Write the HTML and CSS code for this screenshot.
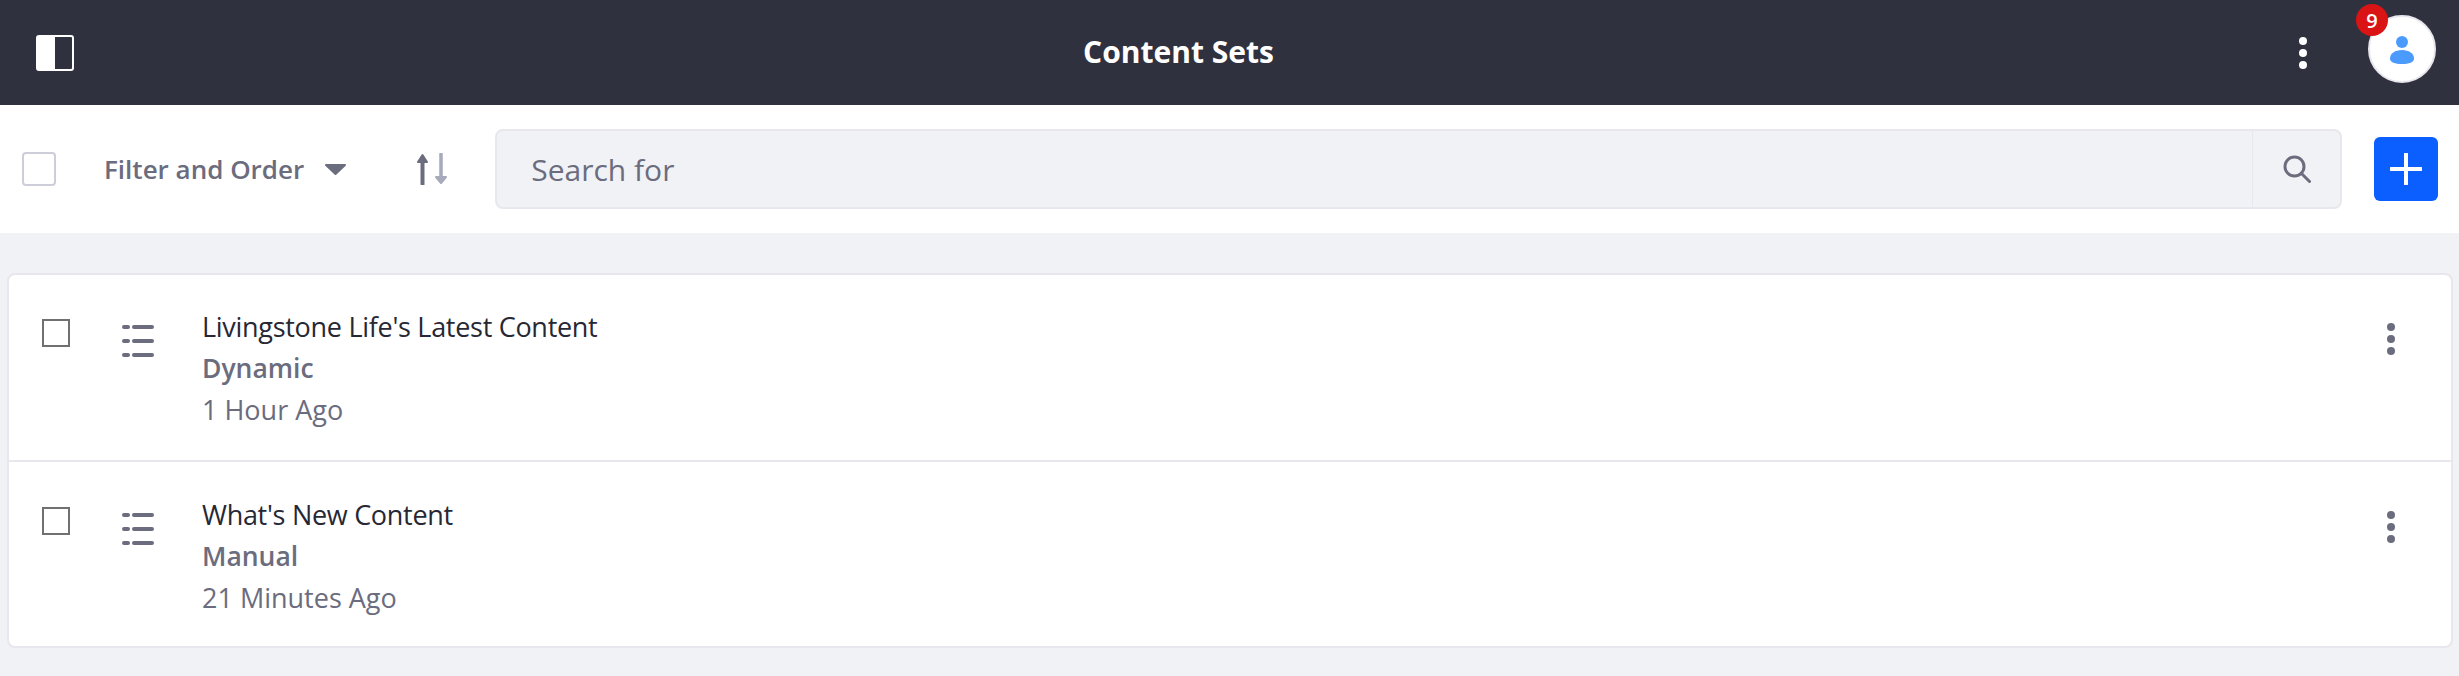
FILE: index.html
```html
<!DOCTYPE html>
<html lang="en">
<head>
    <meta charset="UTF-8">
    <meta name="viewport" content="width=device-width, initial-scale=1.0">
    <title>Content Sets</title>
    <link rel="stylesheet" href="styles.css">
</head>
<body>

    <header class="topbar">
        <svg class="panel-icon" viewBox="0 0 38 36">
            <rect x="1" y="1" width="36" height="34" rx="2" fill="none" stroke="#fff" stroke-width="2"/>
            <rect x="1" y="1" width="18" height="34" fill="#fff"/>
        </svg>
        <h1 class="page-title">Content Sets</h1>
        <div class="topbar-right">
            <div class="dots dots-light"><span></span><span></span><span></span></div>
            <div class="avatar">
                <svg viewBox="0 0 24 28" class="avatar-icon">
                    <circle cx="12" cy="6" r="6" fill="#4b9bff"/>
                    <path d="M12 14c7 0 12 3.500 12 8.500 0 4-5 5.500-12 5.500S0 26.500 0 22.500C0 17.500 5 14 12 14z" fill="#4b9bff"/>
                </svg>
                <span class="badge">9</span>
            </div>
        </div>
    </header>

    <div class="toolbar">
        <span class="check check-light"></span>
        <div class="filter">
            <span>Filter and Order</span>
            <svg class="caret" viewBox="0 0 21 11"><path d="M1 0h19a1 1 0 0 1 .7 1.700l-9.500 9a1 1 0 0 1-1.400 0l-9.500-9A1 1 0 0 1 1 0z" fill="#6b6c7e"/></svg>
        </div>
        <svg class="sort-icon" viewBox="0 0 33 32">
            <path d="M7.500 31V6" stroke="#6b6c7e" stroke-width="4" stroke-linecap="round"/>
            <path d="M3 9l4.500-7L12 9z" fill="#6b6c7e" stroke="#6b6c7e" stroke-width="2" stroke-linejoin="round"/>
            <path d="M26 1v26" stroke="#a7a9bc" stroke-width="3.500" stroke-linecap="round"/>
            <path d="M21 24h10l-5 6z" fill="#a7a9bc" stroke="#a7a9bc" stroke-width="2" stroke-linejoin="round"/>
        </svg>
        <div class="search">
            <span class="search-text">Search for</span>
            <div class="search-btn">
                <svg viewBox="0 0 28 28" class="search-icon">
                    <circle cx="11.500" cy="11.500" r="9.500" fill="none" stroke="#6b6c7e" stroke-width="3"/>
                    <path d="M18.500 18.500l8 8" stroke="#6b6c7e" stroke-width="3" stroke-linecap="round"/>
                </svg>
            </div>
        </div>
        <button class="add-btn">
            <svg viewBox="0 0 32 32" class="plus-icon"><path d="M16 1v30M1 16h30" stroke="#fff" stroke-width="4" stroke-linecap="round"/></svg>
        </button>
    </div>

    <main class="list">
        <div class="row">
            <span class="check"></span>
            <svg class="list-icon" viewBox="0 0 32 32">
                <path d="M2 2h4M12 2h18M2 16h4M12 16h18M2 30h4M12 30h18" stroke="#6b6c7e" stroke-width="4" stroke-linecap="round"/>
            </svg>
            <div class="row-text">
                <p class="row-title">Livingstone Life's Latest Content</p>
                <p class="row-type">Dynamic</p>
                <p class="row-time">1 Hour Ago</p>
            </div>
            <div class="dots"><span></span><span></span><span></span></div>
        </div>
        <div class="row">
            <span class="check"></span>
            <svg class="list-icon" viewBox="0 0 32 32">
                <path d="M2 2h4M12 2h18M2 16h4M12 16h18M2 30h4M12 30h18" stroke="#6b6c7e" stroke-width="4" stroke-linecap="round"/>
            </svg>
            <div class="row-text">
                <p class="row-title">What's New Content</p>
                <p class="row-type">Manual</p>
                <p class="row-time">21 Minutes Ago</p>
            </div>
            <div class="dots"><span></span><span></span><span></span></div>
        </div>
    </main>

</body>
</html>
```

FILE: styles.css
```css
* {
    margin: 0;
    padding: 0;
    box-sizing: border-box;
    font-family: "Open Sans", "Noto Sans", sans-serif;
}

body {
    background: #f1f2f5;
    overflow: hidden;
}

/* top bar */
.topbar {
    height: 105px;
    background: #30313f;
    display: flex;
    align-items: center;
    padding-left: 36px;
}

.panel-icon {
    width: 38px;
    height: 36px;
}

.page-title {
    flex: 1;
    text-align: center;
    color: #fff;
    font-size: 30px;
    font-weight: 700;
    margin-left: -16px;
    margin-bottom: 2px;
}

.topbar-right {
    display: flex;
    align-items: center;
    padding-right: 23px;
    gap: 61px;
}

.dots {
    display: flex;
    flex-direction: column;
    gap: 4px;
    width: 8px;
}

.dots span {
    width: 8px;
    height: 8px;
    border-radius: 50%;
    background: #6b6c7e;
}

.dots-light span {
    background: #fff;
}

.avatar {
    width: 68px;
    height: 68px;
    margin-bottom: 7px;
    background: #fff;
    border: 2px solid #e7e7ed;
    border-radius: 50%;
    display: flex;
    align-items: center;
    justify-content: center;
    position: relative;
}

.avatar-icon {
    width: 24px;
    height: 28px;
    margin-top: 2px;
}

.badge {
    position: absolute;
    left: -14px;
    top: -13px;
    width: 32px;
    height: 32px;
    border-radius: 50%;
    background: #da1414;
    color: #fff;
    font-size: 20px;
    font-weight: 600;
    display: flex;
    align-items: center;
    justify-content: center;
}

/* toolbar */
.toolbar {
    height: 128px;
    background: #fff;
    display: flex;
    align-items: center;
    padding-left: 22px;
}

.check {
    width: 28px;
    height: 28px;
    border: 2px solid #707070;
    flex-shrink: 0;
}

.check-light {
    width: 34px;
    height: 34px;
    border-color: #cdced9;
    border-radius: 4px;
}

.filter {
    display: flex;
    align-items: center;
    margin-left: 48px;
    color: #6b6c7e;
    font-size: 26px;
    font-weight: 600;
}

.caret {
    width: 21px;
    height: 11px;
    margin-left: 21px;
}

.sort-icon {
    width: 33px;
    height: 32px;
    margin-left: 69px;
}

.search {
    width: 1847px;
    height: 80px;
    margin-left: 47px;
    background: #f1f2f5;
    border: 2px solid #e7e7ed;
    border-radius: 8px;
    display: flex;
    align-items: center;
    justify-content: space-between;
}

.search-text {
    color: #6b6c7e;
    font-size: 30px;
    padding-left: 34px;
}

.search-btn {
    width: 88px;
    height: 100%;
    border-left: 1px solid #e7e7ed;
    display: flex;
    align-items: center;
    justify-content: center;
}

.search-icon {
    width: 28px;
    height: 28px;
}

.add-btn {
    width: 64px;
    height: 64px;
    margin-left: 32px;
    background: #0b5fff;
    border: 0;
    border-radius: 6px;
    display: flex;
    align-items: center;
    justify-content: center;
}

.plus-icon {
    width: 32px;
    height: 32px;
}

/* list */
.list {
    margin: 40px 6px 0 7px;
    background: #fff;
    border: 2px solid #e7e7ed;
    border-radius: 8px;
}

.row {
    height: 185px;
    display: flex;
    align-items: flex-start;
    padding: 44px 56px 0 33px;
}

.row + .row {
    height: 186px;
    border-top: 2px solid #e7e7ed;
    padding-top: 45px;
}

.list-icon {
    width: 32px;
    height: 32px;
    margin-left: 52px;
    margin-top: 6px;
    flex-shrink: 0;
}

.row-text {
    flex: 1;
    margin-left: 48px;
    margin-top: -13px;
    font-size: 27px;
    line-height: 41.500px;
}

.row-title {
    color: #272833;
    letter-spacing: -0.290px;
}

.row-type {
    color: #6b6c7e;
    font-size: 26.500px;
    font-weight: 600;
}

.row-time {
    color: #6b6c7e;
}

.row .dots {
    margin-top: 4px;
}
```
